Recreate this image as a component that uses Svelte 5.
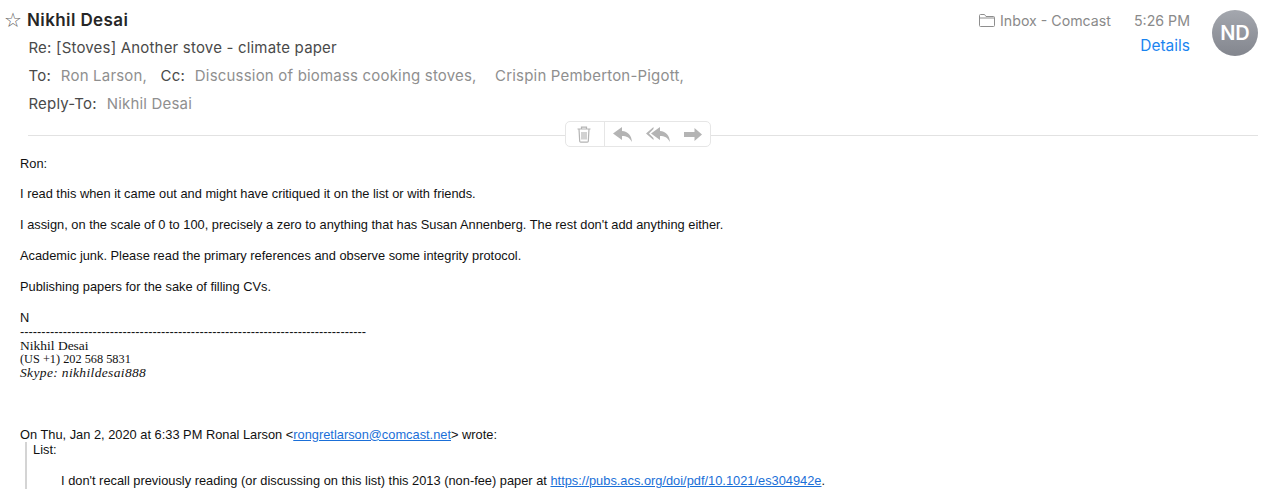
<script>
    const paragraphs = [
        "Ron:",
        "I read this when it came out and might have critiqued it on the list or with friends.",
        "I assign, on the scale of 0 to 100, precisely a zero to anything that has Susan Annenberg. The rest don't add anything either.",
        "Academic junk. Please read the primary references and observe some integrity protocol.",
        "Publishing papers for the sake of filling CVs.",
    ];
</script>

<div class="mail">
    <header class="head">
        <div class="meta">
            <div class="name-row">
                <span class="star">☆</span>
                <span class="name">Nikhil Desai</span>
            </div>
            <div class="row subject">Re: [Stoves] Another stove - climate paper</div>
            <div class="row">
                <span class="label">To:</span>
                <span class="addr">Ron Larson,</span>
                <span class="label cc">Cc:</span>
                <span class="addr">Discussion of biomass cooking stoves,</span>
                <span class="addr extra">Crispin Pemberton-Pigott,</span>
            </div>
            <div class="row">
                <span class="label">Reply-To:</span>
                <span class="addr">Nikhil Desai</span>
            </div>
        </div>
        <div class="side">
            <div class="side-text">
                <div class="where">
                    <svg class="folder" width="16" height="13" viewBox="0 0 16 13" fill="none" stroke="#8e8e8e" stroke-width="1">
                        <path d="M.5 3V1.5a1 1 0 0 1 1-1h4l1.5 2h7.5a1 1 0 0 1 1 1v8a1 1 0 0 1-1 1h-13a1 1 0 0 1-1-1z" />
                        <path d="M.5 4h15" />
                    </svg>
                    <span>Inbox - Comcast</span>
                    <span class="time">5:26 PM</span>
                </div>
                <div class="details">Details</div>
            </div>
            <div class="avatar">ND</div>
        </div>
    </header>

    <div class="divider">
        <div class="tools">
            <div class="tool trash">
                <svg width="14" height="17" viewBox="0 0 14 17" fill="none" stroke="#b4b4b4" stroke-width="1.2">
                    <path d="M.5 3h13M4.500 3V1.200h5V3M2 3l.7 12.200a1 1 0 0 0 1 .9h6.600a1 1 0 0 0 1-.9L12 3" />
                    <path d="M5 6v7.500M7 6v7.500M9 6v7.500" />
                </svg>
            </div>
            <div class="tool actions">
                <svg width="19" height="15" viewBox="0 0 19 15" fill="#b4b4b4">
                    <path d="M9 0 0 6.500 9 13V9c4.500 0 7.500 1.500 10 6-.5-6.500-4-10.500-10-11z" />
                </svg>
                <svg width="24" height="15" viewBox="0 0 24 15" fill="#b4b4b4">
                    <path d="M7.500 0 0 6.500 7.500 13v-2L3 6.500 7.500 2z" />
                    <path d="M14 0 5 6.500l9 6.500V9c4.500 0 7.500 1.500 10 6-.5-6.500-4-10.500-10-11z" />
                </svg>
                <svg width="18" height="13" viewBox="0 0 18 13" fill="#b4b4b4">
                    <path d="M10.500 0 18 6.500 10.500 13V9H0V4h10.500z" />
                </svg>
            </div>
        </div>
    </div>

    <main class="body">
        {#each paragraphs as text}
            <p>{text}</p>
        {/each}
        <div class="sig-n">N</div>
        <div class="dashes">---------------------------------------------------------------------------------</div>
        <div class="sig name-sig">Nikhil Desai</div>
        <div class="sig phone">(US +1) 202 568 5831</div>
        <div class="sig skype"><em>Skype: nikhildesai888</em></div>
        <div class="attribution">
            On Thu, Jan 2, 2020 at 6:33 PM Ronal Larson &lt;<a href="#top">rongretlarson@comcast.net</a>&gt; wrote:
        </div>
        <blockquote>
            <div>List:</div>
            <p class="quoted">
                I don't recall previously reading (or discussing on this list) this 2013 (non-fee) paper at
                <a href="#top">https://pubs.acs.org/doi/pdf/10.1021/es304942e</a>.
            </p>
        </blockquote>
    </main>
</div>

<style>
    :global(body) {
        background: #fff;
        overflow: hidden;
    }

    .mail {
        height: 492px;
        overflow: hidden;
        font-family: Inter, "Liberation Sans", sans-serif;
    }

    .head {
        display: flex;
        justify-content: space-between;
        padding: 8px 22px 0 4px;
        height: 113px;
        box-sizing: border-box;
    }

    .name-row {
        display: flex;
        align-items: center;
        height: 24px;
        gap: 6px;
    }

    .star {
        width: 17px;
        font-size: 20px;
        color: #666;
        font-family: "DejaVu Sans", sans-serif;
    }

    .name {
        font-size: 17px;
        font-weight: 600;
        letter-spacing: 0.4px;
        color: #262626;
    }

    .row {
        margin-left: 24.5px;
        height: 28px;
        line-height: 28px;
        font-size: 15px;
        letter-spacing: 0.19px;
        color: #4a4a4a;
        white-space: nowrap;
    }

    .subject {
        margin-top: 2px;
    }

    .addr {
        color: #8f8f8f;
        margin-left: 5.5px;
    }

    .cc {
        margin-left: 9px;
    }

    .extra {
        margin-left: 14px;
    }

    .side {
        display: flex;
        gap: 22px;
    }

    .side-text {
        display: flex;
        flex-direction: column;
        align-items: flex-end;
    }

    .where {
        display: flex;
        align-items: center;
        height: 24px;
        font-size: 14.2px;
        color: #8a8a8a;
    }

    .folder {
        margin-right: 5px;
    }

    .time {
        margin-left: 23px;
    }

    .details {
        margin-top: 3px;
        font-size: 15.5px;
        line-height: 22px;
        color: #1a84f0;
    }

    .avatar {
        width: 46px;
        height: 46px;
        margin-top: 2px;
        border-radius: 50%;
        background: linear-gradient(#a4a7ae, #83868e);
        color: #fff;
        font-size: 20px;
        font-weight: 600;
        display: flex;
        align-items: center;
        justify-content: center;
    }

    .divider {
        position: relative;
        margin: 8px 22px 0 28px;
        height: 26px;
        display: flex;
        align-items: center;
        justify-content: center;
        padding-right: 10px;
    }

    .divider::before {
        content: "";
        position: absolute;
        left: 0;
        right: 0;
        top: 14px;
        border-top: 1px solid #e2e2e2;
    }

    .tools {
        position: relative;
        display: flex;
        width: 146px;
        height: 26px;
        box-sizing: border-box;
        border: 1px solid #e6e6e6;
        border-radius: 5px;
        background: #fff;
    }

    .tool {
        display: flex;
        align-items: center;
    }

    .trash {
        width: 36px;
        padding-right: 2px;
        justify-content: center;
        border-right: 1px solid #e6e6e6;
    }

    .actions {
        flex: 1;
        padding-left: 8px;
        gap: 14px;
    }

    .body {
        padding: 8.6px 0 0 20px;
        font-family: "Liberation Sans", Arial, sans-serif;
        font-size: 12.84px;
        line-height: 15.4px;
        color: #111;
    }

    p {
        margin: 0 0 15.4px;
    }

    .dashes {
        line-height: 14.4px;
        white-space: nowrap;
    }

    .sig {
        font-family: "Liberation Serif", serif;
        line-height: 13.5px;
    }

    .name-sig {
        font-size: 13.5px;
    }

    .phone {
        font-size: 12.3px;
    }

    .skype {
        font-size: 13.5px;
        letter-spacing: 0.35px;
    }

    .attribution {
        margin-top: 47px;
    }

    a {
        color: #1a6fd8;
        text-decoration: underline;
    }

    blockquote {
        margin: 0 0 0 5px;
        padding-left: 6px;
        border-left: 2px solid #d4d4d4;
    }

    .quoted {
        margin: 15.4px 0 0 28px;
        white-space: nowrap;
    }
</style>
